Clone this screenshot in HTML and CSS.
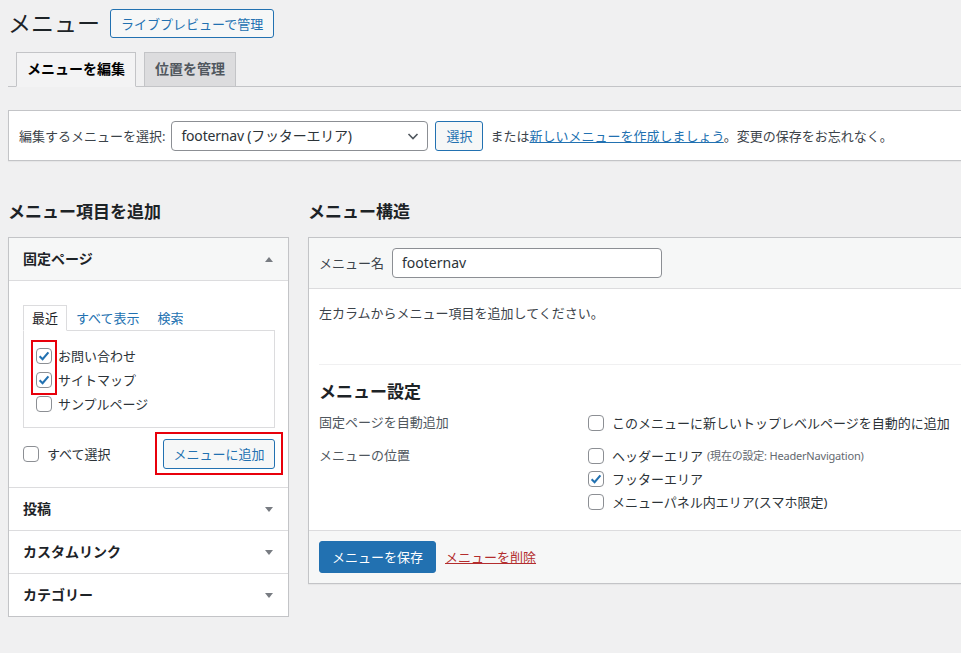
FILE: index.html
```html
<!DOCTYPE html>
<html lang="ja">
<head>
<meta charset="utf-8">
<title>メニュー</title>
<link rel="stylesheet" href="styles.css">
</head>
<body>
<div class="wrap">
  <div class="page-head">
    <h1 class="page-title">メニュー</h1>
    <a class="btn btn-outline">ライブプレビューで管理</a>
  </div>

  <nav class="tabs">
    <span class="tab tab-active">メニューを編集</span>
    <span class="tab">位置を管理</span>
  </nav>

  <div class="manage">
    <span class="manage-label">編集するメニューを選択:</span>
    <div class="select">
      <span>footernav (フッターエリア)</span>
      <svg class="chev" width="16" height="16" viewBox="0 0 16 16"><path d="M3.5 6 L8 10.5 L12.5 6" fill="none" stroke="#50575e" stroke-width="1.6"/></svg>
    </div>
    <span class="btn btn-outline btn-select">選択</span>
    <span class="manage-text">または<a class="link">新しいメニューを作成しましょう</a>。変更の保存をお忘れなく。</span>
  </div>

  <div class="cols">
    <div class="col-left">
      <h2 class="col-title">メニュー項目を追加</h2>
      <div class="acc">
        <div class="acc-sec acc-open">
          <div class="acc-head"><span>固定ページ</span><span class="arrow arrow-up"></span></div>
          <div class="acc-body">
            <div class="mini-tabs">
              <span class="mini-tab mini-tab-active">最近</span>
              <a class="mini-link">すべて表示</a>
              <a class="mini-link">検索</a>
            </div>
            <div class="panel">
              <span class="mark mark-checks"></span>
              <label class="item"><span class="cb cb-on"><svg width="14" height="14" viewBox="0 0 14 14"><path d="M2.6 7.2 L5.6 10.2 L11.4 3.4" fill="none" stroke="#2271b1" stroke-width="2.1"/></svg></span>お問い合わせ</label>
              <label class="item"><span class="cb cb-on"><svg width="14" height="14" viewBox="0 0 14 14"><path d="M2.6 7.2 L5.6 10.2 L11.4 3.4" fill="none" stroke="#2271b1" stroke-width="2.1"/></svg></span>サイトマップ</label>
              <label class="item"><span class="cb"></span>サンプルページ</label>
            </div>
            <div class="add-row">
              <label class="select-all"><span class="cb"></span>すべて選択</label>
              <span class="add-wrap"><span class="btn btn-outline btn-add">メニューに追加</span></span>
            </div>
          </div>
        </div>
        <div class="acc-sec">
          <div class="acc-head"><span>投稿</span><span class="arrow"></span></div>
        </div>
        <div class="acc-sec">
          <div class="acc-head"><span>カスタムリンク</span><span class="arrow"></span></div>
        </div>
        <div class="acc-sec">
          <div class="acc-head"><span>カテゴリー</span><span class="arrow"></span></div>
        </div>
      </div>
    </div>

    <div class="col-right">
      <h2 class="col-title">メニュー構造</h2>
      <div class="menu-box">
        <div class="menu-head">
          <span class="menu-name-label">メニュー名</span>
          <div class="text-input">footernav</div>
        </div>
        <div class="menu-body">
          <p class="instructions">左カラムからメニュー項目を追加してください。</p>
          <div class="settings">
            <h3 class="settings-title">メニュー設定</h3>
            <div class="set-row set-row-first">
              <div class="set-label">固定ページを自動追加</div>
              <div class="set-opts">
                <label class="opt"><span class="cb"></span>このメニューに新しいトップレベルページを自動的に追加</label>
              </div>
            </div>
            <div class="set-row">
              <div class="set-label">メニューの位置</div>
              <div class="set-opts">
                <label class="opt"><span class="cb"></span>ヘッダーエリア <span class="small">(現在の設定: HeaderNavigation)</span></label>
                <label class="opt"><span class="cb cb-on"><svg width="14" height="14" viewBox="0 0 14 14"><path d="M2.6 7.2 L5.6 10.2 L11.4 3.4" fill="none" stroke="#2271b1" stroke-width="2.1"/></svg></span>フッターエリア</label>
                <label class="opt"><span class="cb"></span>メニューパネル内エリア(スマホ限定)</label>
              </div>
            </div>
          </div>
        </div>
        <div class="menu-foot">
          <span class="btn btn-primary">メニューを保存</span>
          <a class="delete-link">メニューを削除</a>
        </div>
      </div>
    </div>
  </div>
</div>
</body>
</html>
```

FILE: styles.css
```css
* { box-sizing: border-box; }

body {
  margin: 0;
  background: #f0f0f1;
  color: #3c434a;
  font-family: "Noto Sans", "Noto Sans CJK JP", sans-serif;
  font-size: 13px;
  line-height: 20px;
  overflow: hidden;
}

.wrap {
  width: 1120px;
  padding-left: 8px;
}

/* header */
.page-head {
  display: flex;
  align-items: center;
  gap: 10px;
  padding-top: 9px;
  height: 38px;
}

.page-title {
  margin: 0;
  font-size: 23px;
  font-weight: 400;
  line-height: 29px;
  color: #1d2327;
}

.btn {
  display: inline-flex;
  align-items: center;
  justify-content: center;
  height: 30px;
  padding: 0 10px;
  border-radius: 3px;
  font-size: 13px;
  line-height: 28px;
  white-space: nowrap;
}

.btn-outline {
  border: 1px solid #2271b1;
  color: #2271b1;
  background: #f6f7f7;
}

.page-head .btn { height: 29px; }

/* tabs */
.tabs {
  display: flex;
  gap: 8px;
  margin-top: 14px;
  padding-left: 8px;
  border-bottom: 1px solid #c3c4c7;
  height: 35px;
}

.tab {
  height: 35px;
  padding: 0 10px;
  border: 1px solid #c3c4c7;
  background: #dcdcde;
  color: #50575e;
  font-size: 14px;
  font-weight: 700;
  line-height: 32px;
}

.tab-active {
  background: #f3f3f4;
  border-bottom-color: #f3f3f4;
  color: #000;
}

/* manage menus bar */
.manage {
  display: flex;
  align-items: center;
  margin-top: 23px;
  height: 51px;
  padding: 0 10px;
  background: #fff;
  border: 1px solid #c3c4c7;
  box-shadow: 0 1px 1px rgba(0,0,0,.04);
}

.manage-label { margin-right: 6px; }

.select {
  display: flex;
  align-items: center;
  justify-content: space-between;
  width: 257px;
  height: 30px;
  padding: 0 6px 0 9px;
  border: 1px solid #8c8f94;
  border-radius: 4px;
  background: #fff;
  color: #2c3338;
  font-size: 14px;
  letter-spacing: -0.2px;
}

.chev { display: block; }

.btn-select {
  margin-left: 7px;
  width: 48px;
  padding: 0;
}

.manage-text { margin-left: 7px; }

.link {
  color: #2271b1;
  text-decoration: underline;
}

/* columns */
.cols {
  display: flex;
  gap: 19px;
  padding-top: 40px;
}

.col-title {
  margin: 0 0 14px;
  font-size: 17px;
  font-weight: 700;
  line-height: 22px;
  color: #1d2327;
}

.col-left { width: 281px; flex: none; }
.col-right { width: 720px; flex: none; }

/* accordion */
.acc {
  background: #fff;
  border: 1px solid #c3c4c7;
  box-shadow: 0 1px 1px rgba(0,0,0,.04);
}

.acc-sec + .acc-sec { border-top: 1px solid #dcdcde; }

.acc-head {
  display: flex;
  align-items: center;
  justify-content: space-between;
  height: 42px;
  padding: 0 15px 0 14px;
  color: #1d2327;
  font-size: 14px;
  font-weight: 700;
}

.acc-open .acc-head {
  background: #f6f7f7;
  border-bottom: 1px solid #dcdcde;
  height: 43px;
}

.arrow {
  width: 0;
  height: 0;
  border-left: 4px solid transparent;
  border-right: 4px solid transparent;
  border-top: 5px solid #787c82;
}

.arrow-up {
  border-top: 0;
  border-bottom: 5px solid #787c82;
}

.acc-body {
  padding: 24px 13px 18px 14px;
}

.mini-tabs {
  display: flex;
  align-items: flex-end;
  height: 26px;
  position: relative;
  z-index: 1;
  margin-bottom: -1px;
}

.mini-tab {
  height: 26px;
  padding: 0 8px;
  border: 1px solid #dcdcde;
  border-bottom-color: #fff;
  background: #fff;
  color: #1d2327;
  line-height: 25px;
}

.mini-link {
  padding: 0 9px;
  color: #2271b1;
  line-height: 25px;
}

.panel {
  position: relative;
  border: 1px solid #dcdcde;
  padding: 13px 12px 11px;
}

.item {
  display: flex;
  align-items: center;
  height: 24px;
  color: #2c3338;
}

.cb {
  display: inline-flex;
  align-items: center;
  justify-content: center;
  flex: none;
  width: 16px;
  height: 16px;
  margin-right: 6px;
  border: 1px solid #8c8f94;
  border-radius: 4px;
  background: #fff;
}

.cb svg { display: block; }

.mark {
  position: absolute;
  border: 2px solid #e8000b;
}

.mark-checks {
  left: 7px;
  top: 9px;
  width: 26px;
  height: 55px;
}

.add-row {
  display: flex;
  align-items: center;
  justify-content: space-between;
  margin-top: 11px;
}

.select-all {
  display: flex;
  align-items: center;
  color: #2c3338;
}

.select-all .cb { margin-right: 8px; }

.add-wrap { position: relative; display: inline-flex; }

.add-wrap::after {
  content: "";
  position: absolute;
  left: -8px;
  top: -7px;
  right: -8px;
  bottom: -6px;
  border: 2px solid #e8000b;
}

.btn-add { width: 112px; padding: 0; }

/* menu structure */
.menu-box {
  background: #fff;
  border: 1px solid #c3c4c7;
  box-shadow: 0 1px 1px rgba(0,0,0,.04);
}

.menu-head {
  display: flex;
  align-items: center;
  gap: 8px;
  height: 51px;
  padding: 0 10px;
  background: #f6f7f7;
  border-bottom: 1px solid #dcdcde;
}

.menu-name-label { color: #3c434a; }

.text-input {
  width: 270px;
  height: 30px;
  padding: 0 9px;
  border: 1px solid #8c8f94;
  border-radius: 4px;
  background: #fff;
  color: #2c3338;
  font-size: 14px;
  line-height: 28px;
}

.menu-body { padding: 0 10px; }

.instructions {
  margin: 0;
  padding-top: 14px;
  height: 75px;
}

.settings {
  border-top: 1px solid #f0f0f1;
  padding: 16px 0 17px;
}

.settings-title {
  margin: 0;
  font-size: 17px;
  font-weight: 700;
  line-height: 22px;
  color: #1d2327;
}

.set-row { display: flex; }
.set-row-first { margin-top: 8px; margin-bottom: 10px; }

.set-label {
  width: 269px;
  flex: none;
  line-height: 23px;
  color: #50575e;
}

.set-opts { display: flex; flex-direction: column; }

.opt {
  display: flex;
  align-items: center;
  height: 23px;
  color: #2c3338;
}

.opt .cb { margin-right: 8px; }

.small {
  margin-left: 4px;
  font-size: 11px;
  letter-spacing: -0.2px;
  color: #646970;
}

.menu-foot {
  display: flex;
  align-items: center;
  height: 53px;
  padding: 0 10px;
  background: #f6f7f7;
  border-top: 1px solid #dcdcde;
}

.btn-primary {
  height: 32px;
  padding: 0 12px;
  background: #2271b1;
  border: 1px solid #2271b1;
  color: #fff;
}

.delete-link {
  margin-left: 9px;
  color: #b32d2e;
  text-decoration: underline;
}
```
